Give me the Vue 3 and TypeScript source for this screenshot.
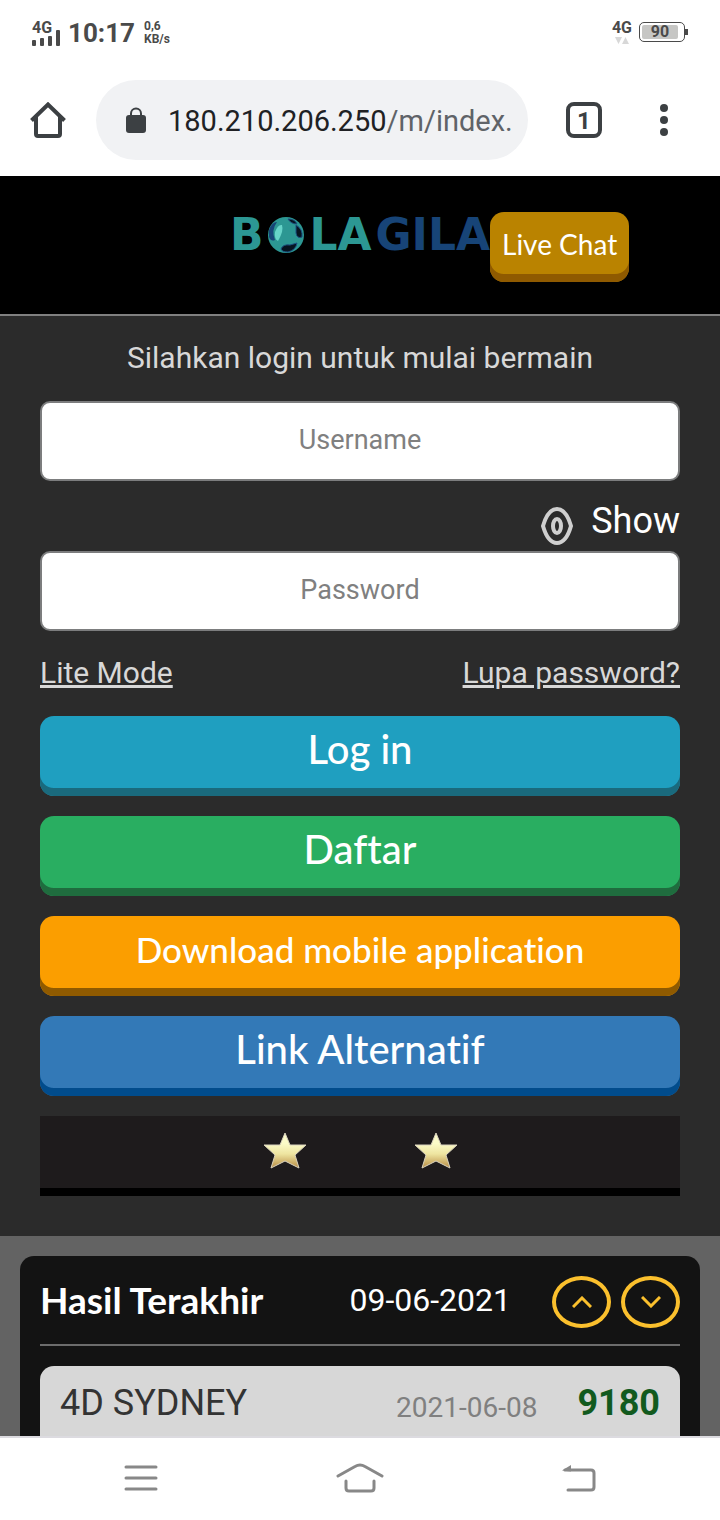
<script setup lang="ts">
import { ref } from 'vue'

interface Action {
  label: string
  tone: string
}

const username = ref('')
const password = ref('')
const visible = ref(false)

const actions: Action[] = [
  { label: 'Log in', tone: 'cyan' },
  { label: 'Daftar', tone: 'green' },
  { label: 'Download mobile application', tone: 'orange' },
  { label: 'Link Alternatif', tone: 'blue' },
]

const results = [{ name: '4D SYDNEY', date: '2021-06-08', number: '9180' }]
</script>

<template>
  <div class="screen">
    <div class="status">
      <div class="signal">
        <span class="net">4G</span>
        <svg width="28" height="17" viewBox="0 0 28 17" fill="#4a4a4a" aria-hidden="true">
          <rect x="0" y="11" width="4" height="6" rx="1" />
          <rect x="8" y="9" width="4" height="8" rx="1" />
          <rect x="16" y="7" width="4" height="10" rx="1" />
          <rect x="24" y="1" width="4" height="16" rx="1" />
        </svg>
      </div>
      <span class="clock">10:17</span>
      <div class="speed"><span>0,6</span><span>KB/s</span></div>
      <div class="data">
        <span class="net">4G</span>
        <svg width="14" height="7" viewBox="0 0 14 7" fill="#d8d8d8" aria-hidden="true">
          <path d="M0 0h7L3.500 7zM7 7h7L10.500 0z" />
        </svg>
      </div>
      <div class="battery"><span class="level">90</span></div>
    </div>

    <div class="browser">
      <button class="icon" aria-label="Home">
        <svg width="36" height="36" viewBox="0 0 36 36" fill="none" stroke="#3c4043" stroke-width="4" aria-hidden="true">
          <path d="M1.500 18.500L18 2.500l16.500 16M6 15v17q0 2 2 2h20q2 0 2-2V15" />
        </svg>
      </button>
      <div class="address">
        <svg width="20" height="26" viewBox="0 0 20 26" aria-hidden="true">
          <path d="M5 10V6.500a5 5 0 0 1 10 0V10" fill="none" stroke="#3c4043" stroke-width="2" />
          <rect y="8" width="20" height="18" rx="3" fill="#3c4043" />
        </svg>
        <span class="url">180.210.206.250<span class="path">/m/index.php</span></span>
      </div>
      <button class="tabs" aria-label="Tabs">1</button>
      <button class="icon" aria-label="Menu">
        <svg width="8" height="32" viewBox="0 0 8 32" fill="#3c4043" aria-hidden="true">
          <circle cx="4" cy="4" r="4" /><circle cx="4" cy="16" r="4" /><circle cx="4" cy="28" r="4" />
        </svg>
      </button>
    </div>

    <header class="top">
      <div class="logo">
        <span>B</span>
        <svg width="38" height="38" viewBox="0 0 38 38" aria-hidden="true">
          <circle cx="19" cy="19" r="18" fill="#2c9793" />
          <path d="M2 14Q5 6 10 6Q4 14 8 24Q4 26 2 21z" fill="#174477" />
          <path d="M21 3q7 0 9 5q-6 0-9-5zM29 9q7 4 6 12q-5 2-6-4zM14 33q2-5 9-4l7-2q-1 7-9 9q-6 0-7-3z" fill="#061420" stroke="#1b4f80" />
          <path d="M8 16q3-8 7-7q2 6-4 16q-4-2-3-9z" fill="#66d3c8" />
        </svg>
        <span>LA</span><span class="navy">GILA</span>
      </div>
      <button class="chat">Live Chat</button>
    </header>

    <main class="login">
      <form @submit.prevent>
        <p class="intro">Silahkan login untuk mulai bermain</p>
        <input v-model="username" class="field" type="text" placeholder="Username" aria-label="Username" />
        <div class="reveal">
          <button type="button" class="show" @click="visible = !visible">
            <svg width="32" height="40" viewBox="0 0 32 40" fill="none" stroke="#cfcfcf" aria-hidden="true">
              <path d="M2 20C4 13 8 3 16 3S28 13 30 20C28 27 24 37 16 37S4 27 2 20z" stroke-width="4" />
              <ellipse cx="16" cy="20" rx="4" ry="7" stroke-width="4" />
            </svg>
            <span>Show</span>
          </button>
        </div>
        <input v-model="password" class="field" :type="visible ? 'text' : 'password'" placeholder="Password" aria-label="Password" />
        <div class="links">
          <a href="#lite">Lite Mode</a>
          <a href="#lupa">Lupa password?</a>
        </div>
        <div class="actions">
          <button v-for="a in actions" :key="a.label" type="button" class="action" :class="a.tone">{{ a.label }}</button>
          <div class="stars">
            <svg v-for="n in 2" :key="n" width="46" height="38" viewBox="0 0 46 38" aria-hidden="true">
              <defs>
                <linearGradient :id="'gold' + n" x1="0" y1="0" x2="0" y2="1">
                  <stop offset="0.300" stop-color="#fbfbc8" />
                  <stop offset="0.600" stop-color="#eee5a0" />
                  <stop offset="1" stop-color="#b98d45" />
                </linearGradient>
              </defs>
              <path d="M23 1L28 13L44 13L33 23L37 36L23 29L9 36L13 23L2 13L18 13z" :fill="'url(#gold' + n + ')'" stroke="#d9d2bd" stroke-width="1" />
            </svg>
          </div>
        </div>
      </form>
    </main>

    <section class="results">
      <div class="panel">
        <div class="heading">
          <h2>Hasil Terakhir</h2>
          <time>09-06-2021</time>
          <div class="arrows">
            <button class="round" aria-label="Up">
              <svg width="20" height="12" viewBox="0 0 20 12" fill="none" stroke="#fbc02d" stroke-width="3" aria-hidden="true"><path d="M1 11L10 2l9 9" /></svg>
            </button>
            <button class="round" aria-label="Down">
              <svg width="20" height="12" viewBox="0 0 20 12" fill="none" stroke="#fbc02d" stroke-width="3" aria-hidden="true"><path d="M1 1l9 9 9-9" /></svg>
            </button>
          </div>
        </div>
        <div v-for="r in results" :key="r.name" class="result">
          <span class="name">{{ r.name }}</span>
          <time>{{ r.date }}</time>
          <strong>{{ r.number }}</strong>
        </div>
      </div>
    </section>

    <nav class="keys">
      <button aria-label="Recent apps">
        <svg width="34" height="26" viewBox="0 0 34 26" stroke="#888" stroke-width="3" stroke-linecap="round" aria-hidden="true"><path d="M2 2h30M2 13h30M2 24h30" /></svg>
      </button>
      <button aria-label="Home screen">
        <svg width="48" height="30" viewBox="0 0 48 30" fill="none" stroke="#888" stroke-width="3" stroke-linecap="round" aria-hidden="true"><path d="M2 13L19 3.500Q24 .5 29 3.500L46 13M10 18v7q0 3 3 3h22q3 0 3-3v-7" /></svg>
      </button>
      <button aria-label="Back">
        <svg width="34" height="28" viewBox="0 0 34 28" fill="none" stroke="#888" stroke-width="3" stroke-linecap="round" aria-hidden="true"><path d="M3 6h26q3 0 3 3v14q0 3-3 3H6" /><path d="M0 6.500L9 1v6.500z" fill="#888" stroke="none" /></svg>
      </button>
    </nav>
  </div>
</template>

<style>
body {
  margin: 0;
  background: #fff;
}
</style>

<style scoped>
.screen {
  display: flex;
  flex-direction: column;
  height: 100vh;
  overflow: hidden;
  font-family: Roboto, 'Liberation Sans', sans-serif;
}
.screen * {
  box-sizing: border-box;
}
button {
  padding: 0;
  border: 0;
  background: none;
  font: inherit;
  color: inherit;
  cursor: pointer;
}
svg {
  display: block;
  flex: none;
}
.status {
  display: flex;
  align-items: center;
  height: 64px;
  padding: 0 35px 0 32px;
  color: #4a4a4a;
  font-weight: 700;
}
.signal {
  display: flex;
  flex-direction: column;
  align-items: flex-start;
  margin-right: 8px;
}
.signal svg {
  margin-top: -8px;
}
.net {
  font-size: 16px;
  line-height: 18px;
}
.clock {
  padding-top: 2px;
  font-size: 26px;
  line-height: 32px;
}
.speed {
  display: flex;
  flex-direction: column;
  flex: 1;
  margin-left: 9px;
  padding-top: 1px;
  font-size: 12px;
  line-height: 13px;
}
.data {
  display: flex;
  flex-direction: column;
  align-items: center;
  margin-right: 7px;
  padding-bottom: 2px;
}
.battery {
  position: relative;
  width: 46px;
  height: 20px;
  padding: 2px;
  border: 1px solid #4a4a4a;
  border-radius: 5px;
}
.battery::after {
  content: '';
  position: absolute;
  top: 6px;
  right: -4px;
  width: 3px;
  height: 6px;
  background: #4a4a4a;
}
.level {
  display: block;
  width: 90%;
  background: #c6c6c4;
  border-radius: 2px;
  font-size: 16px;
  line-height: 14px;
  text-align: center;
}
.browser {
  display: flex;
  align-items: center;
  height: 112px;
  padding: 16px 30px;
}
.address {
  display: flex;
  align-items: center;
  flex: 1;
  min-width: 0;
  height: 80px;
  margin: 0 38px 0 30px;
  padding: 0 14px 0 30px;
  border-radius: 40px;
  background: #f1f2f4;
}
.url {
  flex: 1;
  min-width: 0;
  margin-left: 22px;
  padding-top: 2px;
  overflow: hidden;
  color: #202124;
  font-size: 29px;
  line-height: 36px;
  white-space: nowrap;
}
.path {
  color: #5f6368;
}
.tabs {
  width: 36px;
  height: 36px;
  margin-right: 58px;
  padding-top: 2px;
  border: 4px solid #3c4043;
  border-radius: 8px;
  color: #3c4043;
  font-size: 24px;
  font-weight: 700;
  line-height: 26px;
}
.browser .icon:last-child {
  margin-right: 22px;
}
.top {
  display: grid;
  grid-template-columns: 1fr auto 1fr;
  align-items: start;
  padding: 36px 0 32px;
  border-bottom: 2px solid #808080;
  background: #000;
}
.logo {
  grid-column: 2;
  display: flex;
  align-items: center;
  justify-content: space-between;
  width: 260px;
  height: 46px;
  color: #2c9793;
  font-family: 'DejaVu Sans', sans-serif;
  font-size: 44px;
  font-weight: 700;
  line-height: 46px;
}
.navy {
  color: #174477;
}
.chat {
  justify-self: start;
  height: 70px;
  padding: 0 12px 6px;
  border-radius: 14px;
  background: #ba8300;
  box-shadow: inset 0 -8px #8f5a00;
  color: #fff;
  font-family: Lato, sans-serif;
  font-size: 28px;
}
.login {
  padding: 24px 40px 40px;
  background: #2b2b2b;
  color: #d8d8d8;
}
.intro {
  margin: 0 0 25px;
  font-size: 30px;
  line-height: 36px;
  text-align: center;
}
.field {
  display: block;
  width: 100%;
  height: 80px;
  padding: 0 20px 2px;
  border: 2px solid #7c7d7e;
  border-radius: 10px;
  background: #fff;
  color: #333;
  font-family: inherit;
  font-size: 27px;
  text-align: center;
}
.field::placeholder {
  color: #808080;
}
.reveal {
  display: flex;
  justify-content: flex-end;
  height: 70px;
  padding-top: 20px;
}
.show {
  display: flex;
  align-items: flex-end;
  gap: 18px;
  height: 45px;
  color: #fff;
  font-size: 36px;
}
.show span {
  align-self: flex-start;
  line-height: 40px;
}
.links {
  display: flex;
  justify-content: space-between;
  padding: 24px 0 25px;
  font-size: 30px;
  line-height: 36px;
}
.links a {
  color: inherit;
}
.actions {
  display: flex;
  flex-direction: column;
  gap: 20px;
}
.action {
  height: 80px;
  padding-bottom: 15px;
  border-radius: 14px;
  color: #fff;
  font-family: Lato, sans-serif;
  font-size: 40px;
  font-weight: 500;
  font-variant-ligatures: none;
}
.cyan {
  background: #1f9fc0;
  box-shadow: inset 0 -8px #1a6a7d;
}
.green {
  background: #29ae61;
  box-shadow: inset 0 -8px #1f6c3e;
}
.orange {
  background: #fb9e00;
  box-shadow: inset 0 -8px #8f5a00;
  font-size: 35px;
}
.blue {
  background: #3379b7;
  box-shadow: inset 0 -8px #014c8c;
}
.stars {
  display: flex;
  align-items: center;
  justify-content: center;
  gap: 105px;
  height: 80px;
  padding-bottom: 2px;
  border-bottom: 8px solid #000;
  background: #1e1b1c;
}
.results {
  flex: 1;
  min-height: 0;
  overflow: hidden;
  padding: 20px 20px 0;
  background: #636363;
}
.panel {
  min-height: 240px;
  padding: 20px 20px 0;
  border-radius: 14px;
  background: #131313;
  color: #fff;
}
.heading {
  display: flex;
  align-items: center;
  height: 70px;
  padding-bottom: 16px;
  border-bottom: 2px solid #6c6c6c;
}
.heading h2 {
  flex: 1;
  margin: 0;
  padding-bottom: 4px;
  font-family: Lato, sans-serif;
  font-size: 37px;
  line-height: 48px;
}
.heading time {
  padding-bottom: 4px;
  font-size: 32px;
}
.arrows {
  display: flex;
  gap: 10px;
  margin-left: 41px;
}
.round {
  display: flex;
  align-items: center;
  justify-content: center;
  width: 59px;
  height: 52px;
  border: 4px solid #fbc02d;
  border-radius: 50%;
}
.result {
  display: flex;
  align-items: flex-start;
  min-height: 120px;
  margin-top: 20px;
  padding: 14px 20px;
  border-radius: 14px;
  background: #d7d7d7;
}
.name {
  flex: 1;
  color: #333;
  font-size: 36px;
  line-height: 46px;
}
.result time {
  color: #808080;
  font-size: 28px;
  line-height: 56px;
}
.result strong {
  margin-left: 40px;
  color: #125a1e;
  font-size: 36px;
  line-height: 46px;
}
.keys {
  display: grid;
  grid-template-columns: 1fr 220px 1fr;
  height: 84px;
  padding: 0 32px 2px;
  border-top: 2px solid #dcdbe0;
  background: #fff;
}
.keys button {
  display: flex;
  align-items: center;
  justify-content: center;
}
</style>
